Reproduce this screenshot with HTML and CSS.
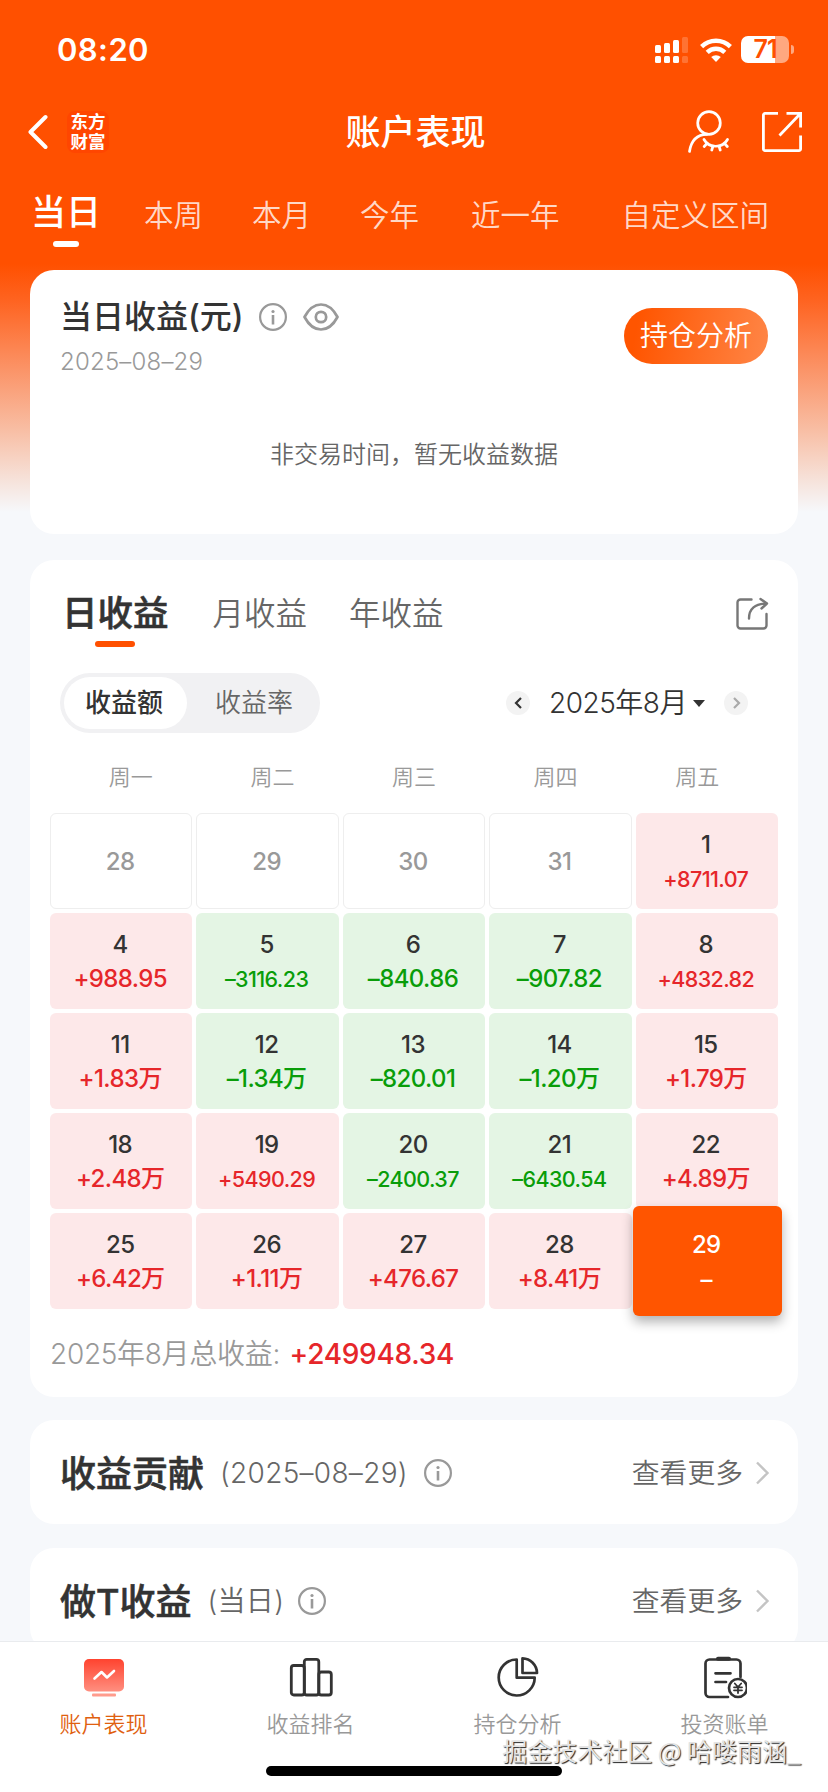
FILE: index.html
```html
<!DOCTYPE html>
<html lang="zh-CN">
<head>
    <meta charset="UTF-8">
    <meta name="viewport" content="width=device-width, initial-scale=1.0">
    <title>账户表现</title>
    <link rel="stylesheet" href="styles.css">
</head>
<body>
    <div class="screen">
        <!-- Status bar -->
        <div class="status-bar">
            <span class="time">08:20</span>
            <div class="status-icons">
                <svg class="signal" width="33" height="27" viewBox="0 0 33 27" fill="#fff">
                    <rect x="0" y="9" width="6" height="8" rx="1.5"/>
                    <rect x="9" y="7" width="6" height="10" rx="1.5"/>
                    <rect x="18" y="4" width="6" height="13" rx="1.5"/>
                    <rect x="0" y="20" width="6" height="7" rx="1.5"/>
                    <rect x="9" y="20" width="6" height="7" rx="1.5"/>
                    <rect x="18" y="20" width="6" height="7" rx="1.5"/>
                    <g opacity="0.2">
                        <rect x="27" y="1" width="6" height="16" rx="1.5"/>
                        <rect x="27" y="20" width="6" height="7" rx="1.5"/>
                    </g>
                </svg>
                <svg class="wifi" width="32" height="24" viewBox="0 0 32 24" fill="none" stroke="#fff" stroke-width="4.4">
                    <path d="M1.6 8.6a20.5 20.5 0 0 1 28.8 0"/>
                    <path d="M7.2 14.4a12.5 12.5 0 0 1 17.6 0"/>
                    <path d="M16 24l-4.8-4.9a6.9 6.9 0 0 1 9.6 0z" fill="#fff" stroke="none"/>
                </svg>
                <div class="battery"><span>71</span></div>
                <i class="battery-cap"></i>
            </div>
        </div>

        <!-- Title bar -->
        <div class="nav-bar">
            <div class="nav-side">
                <svg width="20" height="36" viewBox="0 0 20 36" fill="none" stroke="#fff" stroke-width="4" stroke-linecap="round" stroke-linejoin="round">
                    <path d="M17.5 3L2.5 18l15 15"/>
                </svg>
                <div class="logo">东方<br>财富</div>
            </div>
            <h1>账户表现</h1>
            <div class="nav-side nav-right">
                <svg width="42" height="44" viewBox="0 0 42 44" fill="none" stroke="#fff" stroke-width="2.7" stroke-linecap="round">
                    <circle cx="22" cy="13" r="11.3"/>
                    <path d="M2.5 41.5C4 31 10 24.5 20 24.3"/>
                    <path d="M17 29.5c5 9 18.5 9 23.5 0"/>
                    <path d="M20 33.5l-2.8 3M26 36l-1.2 4M32 36l1.2 4M37.5 33.5l2.8 3"/>
                </svg>
                <svg width="42" height="42" viewBox="0 0 42 42" fill="none" stroke="#fff" stroke-width="2.8">
                    <path d="M17 2.4H4a1.6 1.6 0 0 0-1.6 1.6v34a1.6 1.6 0 0 0 1.6 1.6h34a1.6 1.6 0 0 0 1.6-1.6V24.5"/>
                    <path d="M25.5 2.4h14.1V16.5M39 3L18.5 24.5"/>
                </svg>
            </div>
        </div>

        <!-- Period tabs -->
        <div class="period-tabs">
            <span class="active">当日</span>
            <span>本周</span>
            <span>本月</span>
            <span>今年</span>
            <span>近一年</span>
            <span>自定义区间</span>
        </div>

        <div class="content">
            <!-- Today's profit -->
            <div class="card today">
                <div class="today-head">
                    <div>
                        <div class="today-title">
                            <h2>当日收益(元)</h2>
                            <svg class="info" width="28" height="28" viewBox="0 0 28 28"><use href="#info"/></svg>
                            <svg class="eye" width="36" height="28" viewBox="0 0 36 28" fill="none" stroke="#999" stroke-width="2.7" stroke-linejoin="round">
                                <path d="M1.5 14C5.5 6.5 11.5 1.5 18 1.5S30.5 6.5 34.5 14C30.5 21.5 24.5 26.5 18 26.5S5.5 21.5 1.5 14z"/>
                                <circle cx="18" cy="14" r="5.2"/>
                            </svg>
                        </div>
                        <p class="today-date">2025–08–29</p>
                    </div>
                    <a class="analysis-btn">持仓分析</a>
                </div>
                <p class="empty">非交易时间，暂无收益数据</p>
            </div>

            <!-- Profit calendar -->
            <div class="card calendar">
                <div class="profit-tabs">
                    <span class="active">日收益</span>
                    <span>月收益</span>
                    <span>年收益</span>
                    <svg width="34" height="34" viewBox="0 0 34 34" fill="none" stroke="#777" stroke-width="2.4" stroke-linecap="round" stroke-linejoin="round">
                        <path d="M16.5 2.5H5.500a3 3 0 0 0-3 3v23a3 3 0 0 0 3 3h23a3 3 0 0 0 3-3V17"/>
                        <path d="M14 21.5C14 12 20 6.5 32 6.5M25.5 2l6.5 4.5-5.5 5"/>
                    </svg>
                </div>
                <div class="calendar-bar">
                    <div class="switch">
                        <span class="on">收益额</span>
                        <span>收益率</span>
                    </div>
                    <div class="month">
                        <i class="circle"><svg width="9" height="12" viewBox="0 0 9 12" fill="none" stroke="#333" stroke-width="2.2"><path d="M7 1L2 6l5 5"/></svg></i>
                        <span class="month-text">2025年8月</span>
                        <i class="triangle"></i>
                        <i class="circle"><svg width="9" height="12" viewBox="0 0 9 12" fill="none" stroke="#aaa" stroke-width="2.2"><path d="M2 1l5 5-5 5"/></svg></i>
                    </div>
                </div>
                <div class="weekdays">
                    <span>周一</span><span>周二</span><span>周三</span><span>周四</span><span>周五</span>
                </div>
                <div class="days">
                    <div class="day other">28</div>
                    <div class="day other">29</div>
                    <div class="day other">30</div>
                    <div class="day other">31</div>
                    <div class="day up small">1<b>+8711.07</b></div>

                    <div class="day up">4<b>+988.95</b></div>
                    <div class="day down small">5<b>–3116.23</b></div>
                    <div class="day down">6<b>–840.86</b></div>
                    <div class="day down">7<b>–907.82</b></div>
                    <div class="day up small">8<b>+4832.82</b></div>

                    <div class="day up">11<b>+1.83万</b></div>
                    <div class="day down">12<b>–1.34万</b></div>
                    <div class="day down">13<b>–820.01</b></div>
                    <div class="day down">14<b>–1.20万</b></div>
                    <div class="day up">15<b>+1.79万</b></div>

                    <div class="day up">18<b>+2.48万</b></div>
                    <div class="day up small">19<b>+5490.29</b></div>
                    <div class="day down small">20<b>–2400.37</b></div>
                    <div class="day down small">21<b>–6430.54</b></div>
                    <div class="day up">22<b>+4.89万</b></div>

                    <div class="day up">25<b>+6.42万</b></div>
                    <div class="day up">26<b>+1.11万</b></div>
                    <div class="day up">27<b>+476.67</b></div>
                    <div class="day up">28<b>+8.41万</b></div>
                    <div class="day selected">29<b>–</b></div>
                </div>
                <p class="total">2025年8月总收益: <b>+249948.34</b></p>
            </div>

            <!-- Profit contribution -->
            <div class="card row">
                <h2>收益贡献</h2>
                <span class="sub">(2025–08–29)</span>
                <svg class="info" width="28" height="28" viewBox="0 0 28 28"><use href="#info"/></svg>
                <a class="more">查看更多</a>
                <svg width="15" height="24" viewBox="0 0 15 24" fill="none" stroke="#c4c4c4" stroke-width="2.4"><path d="M2 1.5L12.5 12 2 22.5"/></svg>
            </div>

            <!-- T trade profit -->
            <div class="card row">
                <h2>做T收益</h2>
                <span class="sub period">(当日)</span>
                <svg class="info" width="28" height="28" viewBox="0 0 28 28"><use href="#info"/></svg>
                <a class="more">查看更多</a>
                <svg width="15" height="24" viewBox="0 0 15 24" fill="none" stroke="#c4c4c4" stroke-width="2.4"><path d="M2 1.5L12.5 12 2 22.5"/></svg>
            </div>
        </div>

        <!-- Bottom tabs -->
        <div class="tab-bar">
            <div class="tab active">
                <svg width="44" height="44" viewBox="0 0 44 44">
                    <defs>
                        <linearGradient id="red" x1="0" y1="0" x2="0" y2="1">
                            <stop offset="0" stop-color="#ff432f"/>
                            <stop offset="1" stop-color="#ff8f80"/>
                        </linearGradient>
                    </defs>
                    <rect x="2" y="3" width="40" height="32.5" rx="5" fill="url(#red)"/>
                    <path d="M12.5 22.5l7-6.5 5.5 5.5 7-6.5" fill="none" stroke="#fff" stroke-width="2.6" stroke-linecap="round" stroke-linejoin="round"/>
                    <rect x="10" y="37.5" width="24" height="3" rx="1" fill="#ff9c8d"/>
                </svg>
                <span>账户表现</span>
            </div>
            <div class="tab">
                <svg width="44" height="44" viewBox="0 0 44 44" fill="none" stroke="#333" stroke-width="2.8">
                    <rect x="2.3" y="9.5" width="13" height="29.5" rx="2.5"/>
                    <rect x="15.3" y="3.3" width="14.5" height="35.7" rx="2.5"/>
                    <rect x="29.8" y="16" width="12.5" height="23" rx="2.5"/>
                </svg>
                <span>收益排名</span>
            </div>
            <div class="tab">
                <svg width="44" height="44" viewBox="0 0 44 44" fill="none" stroke="#333" stroke-width="2.7" stroke-linejoin="round">
                    <path d="M20.7 3.500A18 18 0 1 0 38.7 21.7H20.7z"/>
                    <path d="M26.500 2.3A15 15 0 0 1 41 17H26.5z"/>
                </svg>
                <span>持仓分析</span>
            </div>
            <div class="tab">
                <svg width="44" height="44" viewBox="0 0 44 44" fill="none" stroke="#333" stroke-width="2.7" stroke-linecap="round">
                    <path d="M25 41H6.5a4 4 0 0 1-4-4V7.5a4 4 0 0 1 4-4h27a4 4 0 0 1 4 4V21"/>
                    <path d="M15 2.8h11" stroke-width="4"/>
                    <path d="M12.5 17.3h15M12.5 26h10.5"/>
                    <circle cx="35" cy="32" r="9"/>
                    <path d="M31.8 27.5l3.2 3.5 3.2-3.5M35 31v6M31 31.3h8M31 34.3h8" stroke-width="1.8"/>
                </svg>
                <span>投资账单</span>
            </div>
            <i class="home-indicator"></i>
            <div class="watermark">掘金技术社区 @ 哈喽雨涵_</div>
        </div>
    </div>

    <svg class="symbols" width="0" height="0">
        <symbol id="info" viewBox="0 0 28 28">
            <circle cx="14" cy="14" r="12.9" fill="none" stroke="#999" stroke-width="2.2"/>
            <circle cx="14" cy="8.5" r="1.6" fill="#999"/>
            <path d="M14 12v9.5" stroke="#999" stroke-width="2.6"/>
        </symbol>
    </svg>
</body>
</html>
```
FILE: styles.css
```css
* {
    box-sizing: border-box;
}

body {
    margin: 0;
    font-family: Inter, "Noto Sans CJK SC", sans-serif;
    color: #333;
}

h1, h2, p {
    margin: 0;
}

svg {
    display: block;
    flex: none;
}

.symbols {
    position: absolute;
}

.screen {
    display: flex;
    flex-direction: column;
    width: 828px;
    height: 1792px;
    overflow: hidden;
    background: linear-gradient(to bottom, #ff5000 264px, #fe6320 300px, #fb9468 370px, #f8bea4 430px, #f6e2da 480px, #f6f8fb 512px);
}

/* Status bar */
.status-bar {
    display: flex;
    justify-content: space-between;
    height: 88px;
    padding: 30px 34px 0 57px;
    color: #fff;
}

.time {
    font-size: 31px;
    font-weight: 600;
    line-height: 40px;
    letter-spacing: 0.4px;
}

.status-icons {
    display: flex;
    align-items: center;
    height: 39px;
}

.signal {
    margin-right: 12px;
}

.wifi {
    margin-right: 9px;
}

.battery {
    width: 48px;
    height: 27px;
    border-radius: 7px;
    background: linear-gradient(to right, #fff 34px, #ffa880 34px);
    color: #ff5000;
    font-size: 25px;
    font-weight: 600;
    line-height: 27px;
    text-align: center;
    letter-spacing: -1px;
}

.battery-cap {
    width: 3px;
    height: 9px;
    margin-left: 2px;
    border-radius: 0 4px 4px 0;
    background: #ffa880;
}

/* Title bar */
.nav-bar {
    display: flex;
    align-items: center;
    height: 88px;
    padding: 0 25px 0 28px;
    color: #fff;
}

.nav-side {
    display: flex;
    flex: 1;
    align-items: center;
}

.logo {
    width: 42px;
    height: 42px;
    margin-left: 19px;
    border-radius: 8px;
    background: #ff4600;
    font-family: "Noto Sans CJK SC", sans-serif;
    font-size: 17.5px;
    font-weight: 700;
    line-height: 20px;
    text-align: center;
}

h1 {
    font-size: 35px;
    font-weight: 500;
    line-height: 50px;
}

.nav-right {
    justify-content: flex-end;
    gap: 32px;
}

/* Period tabs */
.period-tabs {
    display: flex;
    align-items: flex-start;
    height: 94px;
    padding: 11px 0 0 31px;
    color: rgba(255, 255, 255, 0.8);
    font-size: 29.5px;
    font-weight: 350;
    line-height: 56px;
    white-space: nowrap;
}

.period-tabs span {
    margin-right: 49px;
}

.period-tabs span:nth-child(4) {
    margin-right: 52px;
}

.period-tabs span:nth-child(5) {
    margin-right: 62px;
}

.period-tabs .active {
    display: flex;
    flex-direction: column;
    align-items: center;
    margin-right: 43px;
    color: #fff;
    font-size: 35px;
    font-weight: 500;
    line-height: 50px;
}

.period-tabs .active::after {
    content: "";
    width: 26px;
    height: 6px;
    margin-top: 4px;
    border-radius: 3px;
    background: #fff;
}

/* Cards */
.content {
    display: flex;
    flex: 1;
    flex-direction: column;
    gap: 24px;
    min-height: 0;
    padding: 0 30px;
    overflow: hidden;
}

.card {
    flex: none;
    border-radius: 24px;
    background: #fff;
}

.today {
    height: 264px;
    padding: 24px 30px 0;
}

.today-head {
    display: flex;
    justify-content: space-between;
    height: 90px;
}

.today-title {
    display: flex;
    align-items: center;
    height: 46px;
}

.today-title h2 {
    font-size: 32px;
    font-weight: 500;
    line-height: 46px;
}

.today-title .info {
    margin-left: 15px;
}

.eye {
    margin-left: 16px;
}

.today-date {
    margin-top: 6px;
    color: #999;
    font-size: 24px;
    font-weight: 300;
    line-height: 32px;
    letter-spacing: 0.2px;
}

.analysis-btn {
    width: 144px;
    height: 56px;
    margin-top: 14px;
    border-radius: 28px;
    background: linear-gradient(100deg, #ff5500 10%, #ff8647);
    color: #fff;
    font-size: 28px;
    font-weight: 350;
    line-height: 56px;
    text-align: center;
}

.empty {
    margin-top: 53px;
    color: #666;
    font-size: 24px;
    font-weight: 350;
    line-height: 36px;
    text-align: center;
}

/* Calendar */
.calendar {
    height: 837px;
    margin-top: 2px;
    padding: 26px 20px 0;
}

.profit-tabs {
    display: flex;
    height: 87px;
    padding: 0 9px 0 12px;
    color: #666;
    font-size: 31.5px;
    font-weight: 350;
    line-height: 55px;
}

.profit-tabs span {
    margin-right: 42px;
}

.profit-tabs .active {
    display: flex;
    flex-direction: column;
    align-items: center;
    margin-right: 44px;
    color: #333;
    font-size: 35.5px;
    font-weight: 500;
    -webkit-text-stroke: 0.6px #333;
}

.profit-tabs .active::after {
    content: "";
    width: 40px;
    height: 6px;
    border-radius: 3px;
    background: #ff5000;
}

.profit-tabs svg {
    margin: 11px 0 0 auto;
}

.calendar-bar {
    display: flex;
    align-items: center;
    justify-content: space-between;
    height: 60px;
    padding: 0 30px 0 10px;
}

.switch {
    display: flex;
    width: 260px;
    height: 60px;
    padding: 4px;
    border-radius: 30px;
    background: #f1f1f3;
    color: #666;
    font-size: 26px;
    font-weight: 350;
    line-height: 52px;
    text-align: center;
}

.switch span {
    flex: 1;
    padding-left: 5px;
}

.switch .on {
    flex: none;
    width: 123px;
    padding: 0 3px 0 0;
    border-radius: 26px;
    background: #fff;
    color: #333;
    font-weight: 500;
}

.month {
    display: flex;
    align-items: center;
}

.circle {
    display: flex;
    align-items: center;
    justify-content: center;
    width: 24px;
    height: 24px;
    border-radius: 50%;
    background: #f3f3f3;
}

.month-text {
    margin-left: 19px;
    font-size: 28px;
    font-weight: 350;
    line-height: 40px;
    letter-spacing: -0.5px;
}

.triangle {
    margin: 0 19px 0 6px;
    border: 6.5px solid transparent;
    border-top: 7px solid #333;
    border-bottom: 0;
}

.weekdays {
    display: grid;
    grid-template-columns: repeat(5, 1fr);
    height: 80px;
    padding: 27px 10px 0;
    color: #999;
    font-size: 22px;
    font-weight: 350;
    line-height: 34px;
    text-align: center;
}

.days {
    display: grid;
    grid-template-columns: repeat(5, 1fr);
    grid-auto-rows: 96px;
    gap: 4px;
}

.day {
    display: flex;
    flex-direction: column;
    align-items: center;
    justify-content: center;
    padding: 2px 2px 0 0;
    border-radius: 6px;
    font-size: 24px;
    font-weight: 500;
    line-height: 34px;
    letter-spacing: -0.6px;
}

.day b {
    font-weight: 500;
}

.day.small b {
    font-size: 21.5px;
}

.other {
    border: 1px solid #eee;
    color: #999;
    font-weight: 450;
}

.up {
    background: #fde8e9;
}

.up b, .total b {
    color: #e6262a;
}

.down {
    background: #e4f5e4;
}

.down b {
    color: #099d09;
}

/* The picked day is larger than its grid cell */
.selected {
    z-index: 1;
    margin: -7px -4px -7px -3px;
    background: #ff5500;
    box-shadow: 0 6px 12px rgba(0, 0, 0, 0.3);
    color: #fff;
}

.selected b {
    padding-top: 2px;
    line-height: 32px;
}

.total {
    margin-top: 24px;
    color: #999;
    font-size: 28px;
    font-weight: 350;
    line-height: 42px;
    letter-spacing: -0.3px;
}

.total b {
    margin-left: 2px;
    font-weight: 500;
}

/* Link rows */
.row {
    display: flex;
    align-items: center;
    height: 104px;
    padding: 2px 28px 0 30px;
}

.calendar + .row {
    margin-top: -1px;
}

.row h2 {
    padding-top: 1px;
    font-size: 36px;
    font-weight: 500;
    line-height: 50px;
    -webkit-text-stroke: 0.6px #333;
}

.sub {
    margin: 0 16px 0 16px;
    color: #666;
    font-size: 28px;
    font-weight: 300;
    line-height: 42px;
    letter-spacing: 0.3px;
}

.sub.period {
    margin-right: 14px;
    font-weight: 350;
}

.more {
    margin: 0 12px 0 auto;
    color: #666;
    font-size: 27.8px;
    font-weight: 350;
    line-height: 42px;
}

/* Bottom tabs */
.tab-bar {
    position: relative;
    display: flex;
    flex: none;
    height: 151px;
    padding-top: 14px;
    border-top: 1px solid #e9ebee;
    background: #fff;
}

.tab {
    display: flex;
    flex: 1;
    flex-direction: column;
    align-items: center;
    color: #999;
    font-size: 22px;
    font-weight: 350;
    line-height: 34px;
}

.tab span {
    margin-top: 7px;
}

.tab.active {
    color: #e0600f;
}

.home-indicator {
    position: absolute;
    bottom: 16px;
    left: 266px;
    width: 296px;
    height: 10px;
    border-radius: 5px;
    background: #000;
}

.watermark {
    position: absolute;
    right: 27px;
    bottom: 23px;
    color: #e4e4e4;
    font-family: "Noto Sans CJK SC", sans-serif;
    font-size: 25px;
    line-height: 38px;
    text-shadow: 1px 1px 1px #222;
    white-space: nowrap;
}
```
